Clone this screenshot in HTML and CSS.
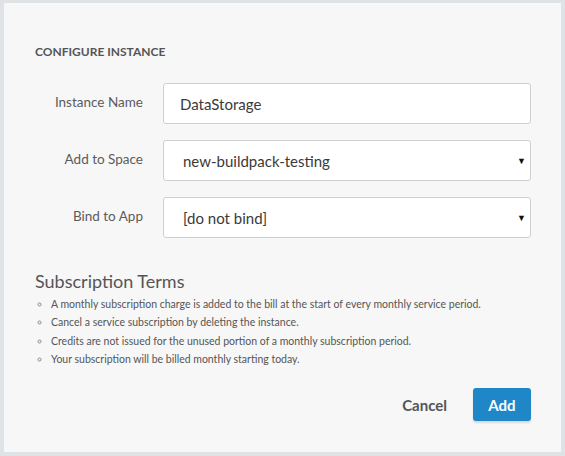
FILE: index.html
```html
<!DOCTYPE html>
<html>
<head>
<meta charset="utf-8">
<link rel="stylesheet" href="styles.css">
</head>
<body>
<div class="panel">
  <h2 class="heading">CONFIGURE INSTANCE</h2>
  <div class="form">
    <div class="row">
      <label class="label">Instance Name</label>
      <div class="field text">DataStorage</div>
    </div>
    <div class="row">
      <label class="label">Add to Space</label>
      <div class="field select"><span>new-buildpack-testing</span><span class="arrow">▼</span></div>
    </div>
    <div class="row">
      <label class="label">Bind to App</label>
      <div class="field select"><span>[do not bind]</span><span class="arrow">▼</span></div>
    </div>
  </div>
  <h3 class="terms-title">Subscription Terms</h3>
  <ul class="terms">
    <li>A monthly subscription charge is added to the bill at the start of every monthly service period.</li>
    <li>Cancel a service subscription by deleting the instance.</li>
    <li>Credits are not issued for the unused portion of a monthly subscription period.</li>
    <li>Your subscription will be billed monthly starting today.</li>
  </ul>
  <div class="actions">
    <button class="btn cancel">Cancel</button>
    <button class="btn add">Add</button>
  </div>
</div>
</body>
</html>
```
FILE: styles.css
```css
* { box-sizing: border-box; }
html, body { margin: 0; padding: 0; }
body {
  background: #dfe3e6;
  font-family: "Lato", "Liberation Sans", sans-serif;
  width: 565px;
  height: 456px;
  padding: 3px 4px 4px 4px;
}
.panel {
  background: #f7f7f7;
  height: 449px;
  padding: 42px 30px 0 31px;
}
.heading {
  margin: 0;
  font-size: 12px;
  font-weight: 700;
  color: #555;
  line-height: 14px;
}
.form {
  margin-top: 24px;
  display: flex;
  flex-direction: column;
  gap: 16px;
}
.row {
  display: flex;
  align-items: center;
}
.label {
  width: 108px;
  text-align: right;
  font-size: 13.5px;
  color: #5b5b5b;
  padding-bottom: 4px;
}
.field {
  margin-left: 20px;
  flex: 1;
  height: 41px;
  background: #fff;
  border: 1px solid #cfcfcf;
  border-radius: 3px;
  display: flex;
  align-items: center;
  font-size: 15px;
  color: #3a3a3a;
}
.text { padding: 0 10px 0 16px; }
.select {
  justify-content: space-between;
  padding: 0 4px 0 19px;
}
.arrow { font-size: 9px; color: #111; }
.terms-title {
  margin: 32px 0 0 0;
  font-size: 18px;
  font-weight: 400;
  color: #555;
  line-height: 22px;
}
.terms {
  margin: 3px 0 0 0;
  padding: 0 0 0 16px;
  list-style: circle;
  font-size: 10.5px;
  line-height: 18.3px;
  color: #555;
}
.terms li::marker { color: #888; font-size: 9px; }
.actions {
  margin-top: 20px;
  display: flex;
  justify-content: flex-end;
  align-items: center;
  gap: 26px;
}
.btn {
  font-family: inherit;
  font-size: 15px;
  font-weight: 700;
  border: none;
  cursor: pointer;
}
.cancel {
  background: transparent;
  color: #555;
  padding: 0;
}
.add {
  background: #1f87c8;
  color: #fff;
  border-radius: 3px;
  width: 58px;
  height: 33px;
  box-shadow: 0 2px 2px rgba(0,0,0,0.12);
}
```
